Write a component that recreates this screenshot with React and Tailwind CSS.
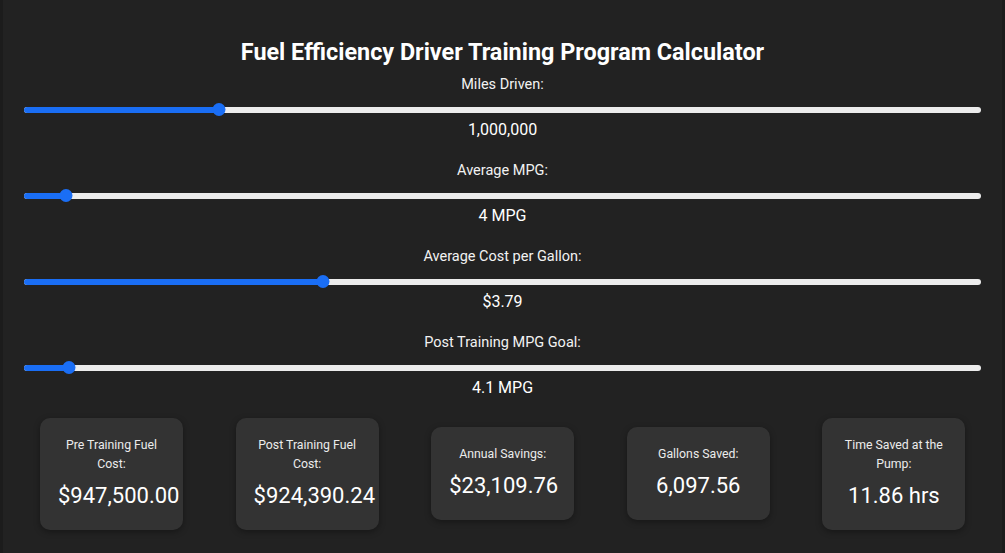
import React from "react";

const sliders = [
  { label: "Miles Driven:", value: "1,000,000", pct: 20.35 },
  { label: "Average MPG:", value: "4 MPG", pct: 4.35 },
  { label: "Average Cost per Gallon:", value: "$3.79", pct: 31.2 },
  { label: "Post Training MPG Goal:", value: "4.1 MPG", pct: 4.7 },
];

const cards = [
  { label: "Pre Training Fuel Cost:", value: "$947,500.00" },
  { label: "Post Training Fuel Cost:", value: "$924,390.24" },
  { label: "Annual Savings:", value: "$23,109.76" },
  { label: "Gallons Saved:", value: "6,097.56" },
  { label: "Time Saved at the Pump:", value: "11.86 hrs" },
];

function Slider({ pct }) {
  return (
    <div className="relative mt-[8px] h-[14px] w-full">
      <div className="absolute left-0 right-0 top-[4px] h-[6px] rounded-full bg-[#ececec]" />
      <div
        className="absolute left-0 top-[4px] h-[6px] rounded-full bg-[#1a6ef5]"
        style={{ width: `${pct}%` }}
      />
      <div
        className="absolute top-[0.5px] h-[13px] w-[13px] -translate-x-1/2 rounded-full bg-[#1a6ef5]"
        style={{ left: `${pct}%` }}
      />
    </div>
  );
}

export default function App() {
  return (
    <div
      className="min-h-[553px] w-full bg-[#1c1c1c] px-[3px] text-white"
      style={{ fontFamily: "Roboto, 'Liberation Sans', sans-serif" }}
    >
      <div className="flex min-h-[553px] flex-col bg-[#222222] px-[21px] pt-[38px]">
        <h1 className="text-center text-[23.4px] font-bold leading-[28px]">
          Fuel Efficiency Driver Training Program Calculator
        </h1>
        <div className="mt-[7.5px] flex flex-col gap-[18px]">
          {sliders.map((s) => (
            <div key={s.label} className="flex flex-col items-center">
              <div className="text-[14.5px] leading-[21px] text-[#f2f2f2]">{s.label}</div>
              <Slider pct={s.pct} />
              <div className="pt-[1px] text-[16px] leading-[24px]">{s.value}</div>
            </div>
          ))}
        </div>
        <div className="mt-[18px] flex items-center gap-[52.6px] pl-[16px]">
          {cards.map((c) => (
            <div
              key={c.label}
              className="w-[143px] shrink-0 rounded-[10px] bg-[#333333] px-[18px] pt-[18.5px] pb-[18px] text-center shadow-[0_2px_6px_rgba(0,0,0,0.35)]"
            >
              <div className="text-[12.3px] leading-[18.5px] text-[#ececec]">{c.label}</div>
              <div className="mt-[5.5px] whitespace-nowrap text-[22px] leading-[33px]">{c.value}</div>
            </div>
          ))}
        </div>
      </div>
    </div>
  );
}
